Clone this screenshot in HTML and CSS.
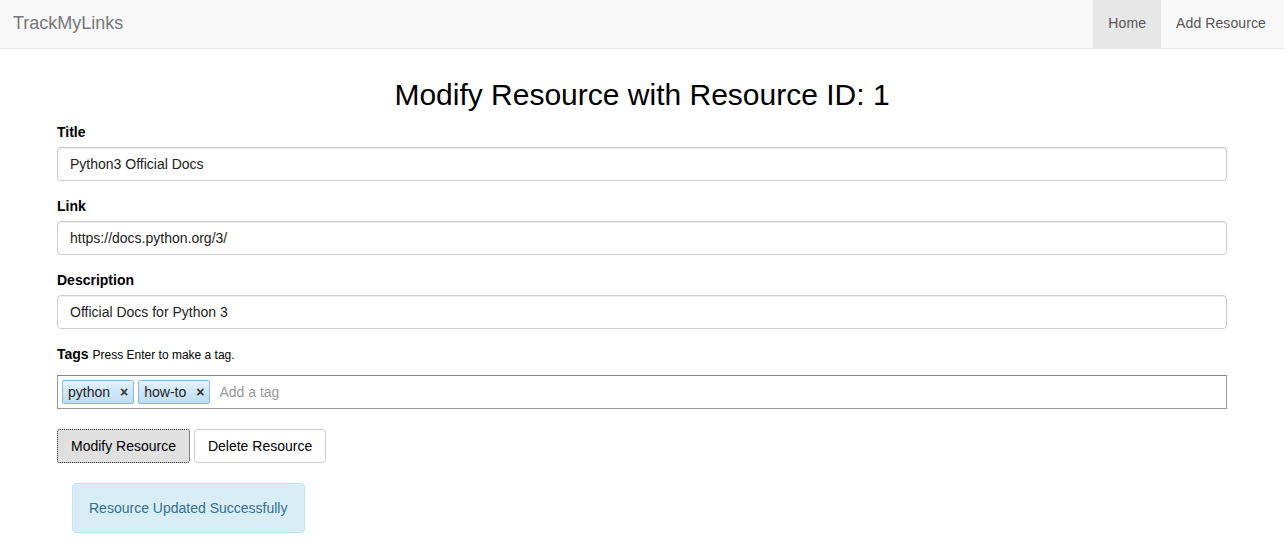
FILE: index.html
```html
<!DOCTYPE html>
<html>
<head>
<meta charset="utf-8">
<title>TrackMyLinks</title>
<link rel="stylesheet" href="styles.css">
</head>
<body>
<nav class="navbar">
  <a class="brand" href="#">TrackMyLinks</a>
  <ul class="nav">
    <li class="active"><a href="#">Home</a></li>
    <li class="last"><a href="#">Add Resource</a></li>
  </ul>
</nav>
<main class="container">
  <h2 class="heading">Modify Resource with Resource ID: 1</h2>
  <form class="form">
    <div class="form-group">
      <label class="label">Title</label>
      <div class="input">Python3 Official Docs</div>
    </div>
    <div class="form-group">
      <label class="label">Link</label>
      <div class="input">https://docs.python.org/3/</div>
    </div>
    <div class="form-group">
      <label class="label">Description</label>
      <div class="input">Official Docs for Python 3</div>
    </div>
    <div class="form-group">
      <label class="label label-tags">Tags <span class="hint">Press Enter to make a tag.</span></label>
      <div class="tag-box">
        <span class="tag">python <span class="x">&#215;</span></span>
        <span class="tag">how-to <span class="x">&#215;</span></span>
        <span class="placeholder">Add a tag</span>
      </div>
    </div>
    <div class="actions">
      <button type="button" class="btn btn-focus">Modify Resource</button>
      <button type="button" class="btn">Delete Resource</button>
    </div>
  </form>
  <div class="alert">Resource Updated Successfully</div>
</main>
</body>
</html>
```
FILE: styles.css
```css
* { box-sizing: border-box; }
html, body { margin: 0; padding: 0; }
body {
  font-family: "Liberation Sans", Arial, sans-serif;
  font-size: 14px;
  line-height: 20px;
  color: #333;
  background: #fff;
}
.navbar {
  display: flex;
  justify-content: space-between;
  height: 49px;
  background: #f8f8f8;
  border-bottom: 1px solid #e7e7e7;
}
.brand {
  display: block;
  padding: 0 13px;
  font-size: 18px;
  line-height: 46px;
  color: #777;
  text-decoration: none;
}
.nav {
  display: flex;
  list-style: none;
  margin: 0;
  padding: 0;
}
.nav li a {
  display: block;
  padding: 0 15px 0 15px;
  line-height: 46px;
  height: 48px;
  color: #555;
  text-decoration: none;
  letter-spacing: 0.1px;
}
.nav li.last a { padding-right: 18px; }
.nav li.active a {
  background: #e7e7e7;
  color: #555;
}
.container {
  width: 1170px;
  margin: 0 auto;
}
.heading {
  margin: 29px 0 11px;
  font-size: 30px;
  font-weight: 500;
  line-height: 33px;
  text-align: center;
  color: #000;
}
.form-group { margin-bottom: 15px; }
.label {
  display: block;
  margin-bottom: 5px;
  font-weight: bold;
  color: #000;
}
.label-tags { margin-bottom: 10px; }
.hint {
  font-weight: normal;
  font-size: 12px;
}
.input {
  height: 34px;
  padding: 6px 12px;
  border: 1px solid #ccc;
  border-radius: 4px;
  box-shadow: inset 0 1px 1px rgba(0,0,0,.075);
  color: #222;
  line-height: 20px;
}
.tag-box {
  display: flex;
  align-items: center;
  gap: 4px;
  height: 34px;
  padding: 0 4px;
  border: 1px solid #999;
  border-top-color: #888;
  background: #fff;
}
.tag {
  display: inline-flex;
  align-items: center;
  height: 24px;
  padding: 0 5px 0 5px;
  border: 1px solid #8db6d8;
  border-radius: 2px;
  background: linear-gradient(#e4f2fd, #bcdcf3);
  color: #222;
  font-size: 14px;
}
.tag .x {
  margin-left: 10px;
  font-weight: bold;
  font-size: 14px;
  color: #333;
}
.placeholder {
  margin-left: 5px;
  color: #999;
}
.actions { margin-top: 20px; }
.btn {
  display: inline-block;
  height: 34px;
  padding: 6px 13px;
  font-family: inherit;
  font-size: 14px;
  line-height: 20px;
  color: #000;
  background: #fff;
  border: 1px solid #ccc;
  border-radius: 4px;
  margin: 0;
}
.btn-focus {
  background: #e0e0e0;
  border: 1px dotted #222;
  border-radius: 3px;
}
.alert {
  display: inline-block;
  margin: 20px 0 0 15px;
  padding: 15px 17px 15px 16px;
  background: #d9edf7;
  border: 1px solid #bce8f1;
  border-radius: 4px;
  color: #31708f;
  line-height: 18px;
}
```
